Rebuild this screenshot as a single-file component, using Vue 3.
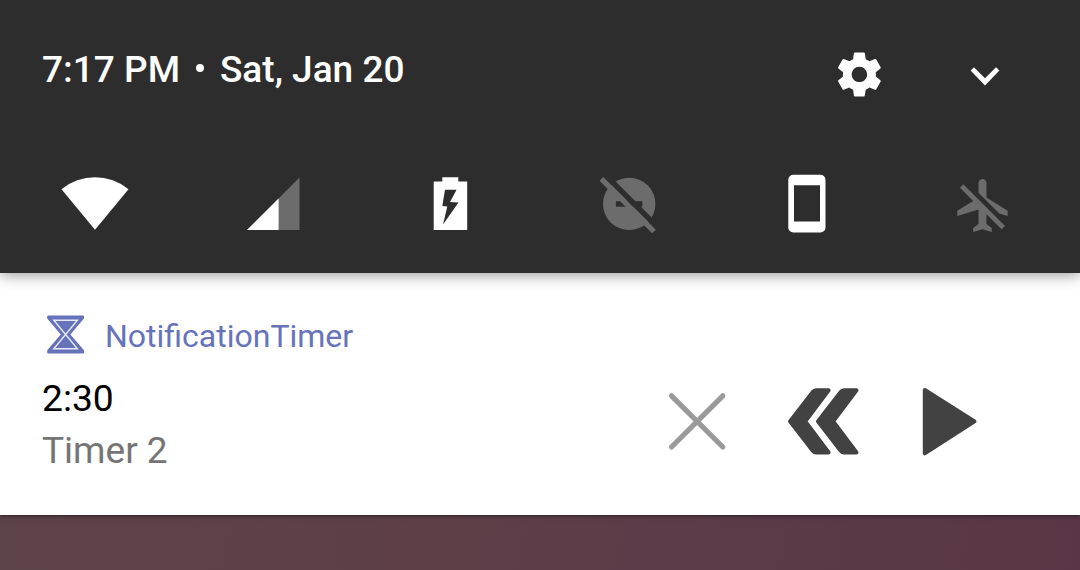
<script setup>
</script>

<template>
  <main class="screen">
    <header class="shade">
      <div class="topline">
        <div class="datetime"><span class="time">7:17 PM</span><i class="dot"></i><span class="date">Sat, Jan 20</span></div>
        <div class="controls">
          <svg class="gear" viewBox="0 0 24 24"><path fill="#fff" d="M19.43 12.98c.04-.32.07-.64.07-.98s-.03-.66-.07-.98l2.11-1.65c.19-.15.24-.42.12-.64l-2-3.46c-.12-.22-.39-.3-.61-.22l-2.49 1c-.52-.4-1.08-.73-1.69-.98l-.38-2.65C14.46 2.18 14.25 2 14 2h-4c-.25 0-.46.18-.49.42l-.38 2.65c-.61.25-1.17.59-1.69.98l-2.49-1c-.23-.09-.49 0-.61.22l-2 3.46c-.13.22-.07.49.12.64l2.11 1.65c-.04.32-.07.65-.07.98s.03.66.07.98l-2.11 1.65c-.19.15-.24.42-.12.64l2 3.46c.12.22.39.3.61.22l2.49-1c.52.4 1.08.73 1.69.98l.38 2.65c.03.24.24.42.49.42h4c.25 0 .46-.18.49-.42l.38-2.65c.61-.25 1.17-.59 1.69-.98l2.49 1c.23.09.49 0 .61-.22l2-3.46c.12-.22.07-.49-.12-.64l-2.11-1.65zM12 15.5c-1.93 0-3.5-1.57-3.5-3.5s1.57-3.5 3.5-3.5 3.5 1.57 3.5 3.5-1.57 3.5-3.5 3.5z" /></svg>
          <svg class="chevron" viewBox="965 54 40 40"><path fill="#fff" d="M970.6 70.6l3.4-3.4 11 11 11-11 3.4 3.4L985 85.5z" /></svg>
        </div>
      </div>
      <div class="status">
        <svg viewBox="55 164 80 80"><path fill="#fff" d="M95 229.7L61.5 189.2A53 53 0 0 1 128.5 189.2z" /></svg>
        <svg viewBox="232 164 80 80">
          <path fill="#6c6c6c" d="M299.5 177.5V230H247z" />
          <path fill="#fff" d="M278.6 198.4V230H247z" />
        </svg>
        <svg viewBox="409 164 80 80">
          <path fill="#fff" fill-rule="evenodd" d="M442.3 177.2h16v4.3h8.9V230h-33.5v-48.5h8.6zM445 189.8l-2.7 16.2 5 .5-4.3 18 15.5-22-8.5-.5 6.6-12.2z" />
        </svg>
        <svg viewBox="586 164 80 80">
          <circle cx="629.2" cy="203.9" r="26.2" fill="#6c6c6c" />
          <path fill="#2d2d2d" d="M615.9 201.2h26.4v5.5h-26.4z" />
          <path stroke="#2d2d2d" stroke-width="5.4" d="M605 174.7l56 56" />
          <path stroke="#6c6c6c" stroke-width="5.2" d="M601.4 178.9l52.6 52.6" />
        </svg>
        <svg viewBox="763 164 80 80">
          <path fill="#fff" fill-rule="evenodd" d="M793.3 174.7h27.2a5 5 0 0 1 5 5v47.8a5 5 0 0 1-5 5h-27.2a5 5 0 0 1-5-5v-47.8a5 5 0 0 1 5-5zM794 185.2v36.4h26v-36.4z" />
        </svg>
        <svg viewBox="940 164 80 80">
          <path transform="translate(952 173.7) scale(2.65)" fill="#6c6c6c" d="M13 9V3.5C13 2.67 12.33 2 11.5 2S10 2.67 10 3.5v3.68l7.83 7.83L21 16v-2l-8-5zM3 5.27l4.99 4.99L2 14v2l8-2.5V19l-2 1.5V22l3.5-1 3.5 1v-1.5L13 19v-3.73L18.73 21 20 19.73 4.27 4z" />
        </svg>
      </div>
    </header>

    <section class="notification">
      <div class="info">
        <div class="app">
          <svg class="glass" viewBox="45 314 42 42">
            <path fill="#6673ba" stroke="#6673ba" stroke-width="2" stroke-linejoin="round" d="M48.2 316.6h34.8v1.6L69 334.5 83 350.7v1.7H48.2v-1.7L62.1 334.5 48.2 318.2z" />
            <path fill="none" stroke="#e8eaf8" stroke-width="1.4" d="M53.8 320.3h23.6L53.8 348.7h23.6z" />
          </svg>
          <span class="appname">NotificationTimer</span>
        </div>
        <div class="remaining">2:30</div>
        <div class="label">Timer 2</div>
      </div>
      <div class="actions">
        <svg class="close" viewBox="657 382 80 80"><path stroke="#9a9a9a" stroke-width="5.2" stroke-linecap="round" d="M671.5 395.8L722.8 447M722.8 395.8L671.5 447" /></svg>
        <svg class="rewind" viewBox="783 382 80 80">
          <g fill="#424242" stroke="#424242" stroke-width="4" stroke-linejoin="round">
            <path d="M790 421.4L812.6 392.2Q814 390.3 816.2 390.3H828.6L805.3 421.4 828.6 452.5H816.2Q814 452.5 812.6 450.6z" />
            <path d="M817.9 421.4L840.5 392.2Q841.9 390.3 844.1 390.3H856.5L833.2 421.4 856.5 452.5H844.1Q841.9 452.5 840.5 450.6z" />
          </g>
        </svg>
        <svg class="play" viewBox="909 382 80 80"><path fill="#424242" stroke="#424242" stroke-width="4" stroke-linejoin="round" d="M924.8 389.9L974.5 421.4 924.8 453.3z" /></svg>
      </div>
    </section>
    <div class="wallpaper"></div>
  </main>
</template>

<style>
body { margin: 0; overflow: hidden; }
</style>

<style scoped>
.screen { width: 1080px; height: 570px; display: flex; flex-direction: column; overflow: hidden; font-family: Roboto, sans-serif; }
svg { display: block; flex: none; width: 80px; height: 80px; }
.shade { height: 273px; box-sizing: border-box; background: #2d2d2d; color: #fff; position: relative; z-index: 2; box-shadow: 0 2px 14px rgba(0, 0, 0, .4); }
.topline { height: 164px; padding: 47.4px 75px 0 42px; box-sizing: border-box; display: flex; justify-content: space-between; align-items: flex-start; }
.datetime { display: flex; align-items: center; height: 44px; margin-top: 1px; font-size: 37px; font-weight: 500; line-height: 44px; white-space: nowrap; }
.time { width: 139.4px; }
.dot { width: 8.4px; height: 8.4px; margin: 0 15.8px 5px 14.4px; border-radius: 50%; background: #fff; }
.controls { display: flex; }
.gear { width: 52.8px; height: 52.8px; margin: .3px 79.6px 0 0; }
.chevron { width: 40px; height: 40px; margin-top: 6.6px; }
.status { display: flex; gap: 97px; padding-left: 55px; }
.notification { height: 242px; box-sizing: border-box; background: #fff; display: flex; justify-content: space-between; padding: 41px 91px 0 42px; position: relative; z-index: 1; box-shadow: 0 1px 4px rgba(0, 0, 0, .5); }
.info { white-space: nowrap; }
.app { display: flex; align-items: center; height: 42px; padding-left: 3px; gap: 18px; color: #6673ba; font-size: 32px; }
.glass { width: 42px; height: 42px; }
.appname { line-height: 42px; padding-top: 1px; }
.remaining { margin-top: 20px; color: #000; font-size: 37.2px; line-height: 44px; }
.label { margin-top: 9px; color: #757575; font-size: 37px; line-height: 44px; }
.actions { display: flex; gap: 46px; padding-top: 68px; }
.wallpaper { flex: 1; background: linear-gradient(100deg, #5e4249 0%, #5e3f48 40%, #583647 100%); }
</style>
